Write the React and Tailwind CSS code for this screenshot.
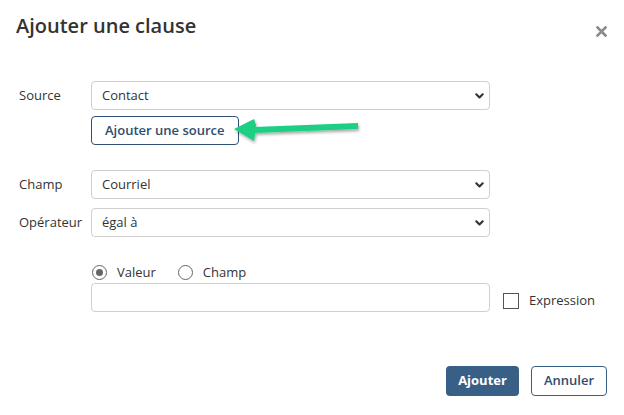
import React from "react";

function Chevron() {
  return (
    <svg width="9" height="7" viewBox="0 0 9 7" className="absolute right-[5px] top-1/2 -translate-y-1/2">
      <path d="M1.3 1.8 L4.5 5 L7.7 1.8" fill="none" stroke="#333" strokeWidth="2.1" strokeLinecap="round" strokeLinejoin="round" />
    </svg>
  );
}

function Select({ value }) {
  return (
    <div className="relative w-[399px] h-[29px] border border-[#cfcfcf] rounded-[4px] flex items-center pl-[10px] text-[13px] text-[#333] bg-white">
      {value}
      <Chevron />
    </div>
  );
}

function Radio({ checked, label }) {
  return (
    <div className="flex items-center gap-[10px]">
      <div className="w-[15px] h-[15px] rounded-full border border-[#666] flex items-center justify-center">
        {checked && <div className="w-[7px] h-[7px] rounded-full bg-[#666]" />}
      </div>
      <span className="text-[13px] text-[#333]">{label}</span>
    </div>
  );
}

export default function App() {
  return (
    <div
      className="relative w-[624px] h-[415px] bg-white overflow-hidden"
      style={{ fontFamily: '"Open Sans", sans-serif' }}
    >
      <div className="flex items-start justify-between pl-[16px] pr-[17px] pt-[11px]">
        <h1 className="text-[20px] font-semibold text-[#333] leading-[30px]">Ajouter une clause</h1>
        <svg width="11" height="11" viewBox="0 0 11 11" className="mt-[15px]">
          <path d="M1.5 1.5 L9.5 9.5 M9.5 1.5 L1.5 9.5" stroke="#8a8a8a" strokeWidth="2.6" strokeLinecap="square" />
        </svg>
      </div>

      <div className="pl-[19px] mt-[40px] flex flex-col">
        <div className="flex items-center">
          <div className="w-[72px] text-[13px] text-[#333]">Source</div>
          <Select value="Contact" />
        </div>
        <div className="pl-[72px] mt-[6px]">
          <button className="h-[29px] px-[13px] border border-[#2e5275] rounded-[4px] text-[13px] font-semibold text-[#2e4d6e] bg-white">
            Ajouter une source
          </button>
        </div>

        <div className="flex items-center mt-[25px]">
          <div className="w-[72px] text-[13px] text-[#333]">Champ</div>
          <Select value="Courriel" />
        </div>
        <div className="flex items-center mt-[9px]">
          <div className="w-[72px] text-[13px] text-[#333]">Opérateur</div>
          <Select value="égal à" />
        </div>

        <div className="pl-[73px] mt-[26px] flex items-center gap-[22px]">
          <Radio checked label="Valeur" />
          <Radio label="Champ" />
        </div>
        <div className="pl-[72px] mt-0 flex items-center">
          <div className="w-[399px] h-[29px] border border-[#cfcfcf] rounded-[4px] bg-white" />
          <div className="ml-[13px] mt-[7px] flex items-center gap-[10px]">
            <div className="w-[16px] h-[16px] border border-[#555] bg-white" />
            <span className="text-[13px] text-[#333]">Expression</span>
          </div>
        </div>
      </div>

      <div className="flex justify-end gap-[12px] pr-[17px] mt-[54px]">
        <button className="h-[30px] px-[12px] rounded-[4px] bg-[#386086] text-white text-[13px] font-bold">
          Ajouter
        </button>
        <button className="h-[30px] px-[12px] rounded-[4px] border border-[#386086] bg-white text-[#2e4d6e] text-[13px] font-semibold">
          Annuler
        </button>
      </div>

      <svg
        width="140"
        height="40"
        viewBox="0 0 140 40"
        className="absolute left-[228px] top-[108px]"
      >
        <defs>
          <filter id="sh" x="-20%" y="-50%" width="140%" height="200%">
            <feDropShadow dx="1" dy="2" stdDeviation="1.5" floodColor="#000" floodOpacity="0.35" />
          </filter>
        </defs>
        <g filter="url(#sh)">
          <path d="M130 15 L26 19 L26 25 L130 21 Z" fill="#1ccf82" />
          <path d="M6 21 L26 11 L28 17 L27 27 L26 33 Z" fill="#1ccf82" />
        </g>
      </svg>
    </div>
  );
}
